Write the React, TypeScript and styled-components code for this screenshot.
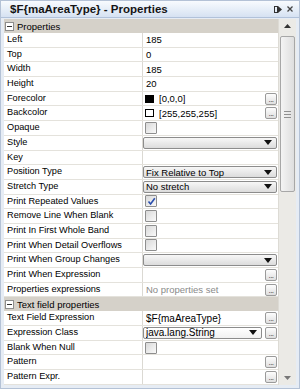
import styled, { createGlobalStyle } from "styled-components";

const GlobalStyle = createGlobalStyle`
  body {
    margin: 0;
    font-family: "Liberation Sans", Arial, sans-serif;
    background: #ffffff;
  }
`;

const Window = styled.div`
  width: 300px;
  height: 389px;
  box-sizing: border-box;
  display: flex;
  flex-direction: column;
  background: #e6ecf4;
  border: 1px solid #b4c2d6;
  overflow: hidden;
`;

const TitleBar = styled.div`
  height: 16px;
  display: flex;
  align-items: center;
  padding: 0 6px 0 9px;
  background: linear-gradient(#f8fbfe, #d6e2f2);
  border-bottom: 1px solid #b1c2da;
`;

const Title = styled.div`
  flex: 1;
  font-size: 11.5px;
  font-weight: bold;
  color: #151515;
  white-space: nowrap;
`;

const TitleButtons = styled.div`
  display: flex;
  align-items: center;
  gap: 5px;
`;

const Body = styled.div`
  flex: 1;
  display: flex;
  min-height: 0;
  padding: 1px 3px 3px 3px;
`;

const Sheet = styled.div`
  flex: 1;
  display: flex;
  flex-direction: column;
  background: #ffffff;
  overflow: hidden;
`;

const Category = styled.div`
  height: 14px;
  flex-shrink: 0;
  display: flex;
  align-items: center;
  gap: 3px;
  padding-left: 1px;
  background: #d5d1c9;
  font-size: 9.5px;
  color: #000;
  box-sizing: border-box;
`;

const Toggle = styled.div`
  width: 9px;
  height: 9px;
  box-sizing: border-box;
  border: 1px solid #8d8d8d;
  background: #fff;
  display: flex;
  align-items: center;
  justify-content: center;
  &::after {
    content: "";
    width: 5px;
    height: 1px;
    background: #333;
  }
`;

const Row = styled.div`
  height: 14.7px;
  flex-shrink: 0;
  box-sizing: border-box;
  display: grid;
  grid-template-columns: 139px 1fr;
  border-bottom: 1px solid #e4e2dc;
`;

const Label = styled.div`
  padding-left: 3px;
  border-right: 1px solid #dbd9d3;
  font-size: 9.2px;
  line-height: 13.7px;
  color: #000;
  white-space: nowrap;
  overflow: hidden;
`;

const Value = styled.div`
  display: flex;
  align-items: center;
  padding-right: 1px;
  min-width: 0;
`;

const ValueText = styled.span<{ $muted?: boolean; $big?: boolean }>`
  padding-left: 3px;
  font-size: ${({ $big }) => ($big ? "10px" : "9.5px")};
  color: ${({ $muted }) => ($muted ? "#8a8a8a" : "#000")};
  white-space: nowrap;
`;

const Swatch = styled.span<{ $color: string }>`
  width: 9px;
  height: 8px;
  margin-left: 2px;
  box-sizing: border-box;
  border: 1px solid #000;
  background: ${({ $color }) => $color};
  flex-shrink: 0;
`;

const Check = styled.span`
  width: 12px;
  height: 12px;
  margin-left: 2px;
  box-sizing: border-box;
  border: 1px solid #8e8e8e;
  border-radius: 1px;
  background: linear-gradient(135deg, #d9d9d9, #f9f9f9);
  display: flex;
  align-items: center;
  justify-content: center;
  flex-shrink: 0;
`;

const Combo = styled.div<{ $light?: boolean }>`
  flex: 1;
  height: 12px;
  box-sizing: border-box;
  display: flex;
  align-items: center;
  border: 1px solid #8c8c8c;
  border-radius: 2px;
  background: ${({ $light }) =>
    $light
      ? "linear-gradient(#ffffff, #f1f1f1)"
      : "linear-gradient(#f7f7f7, #dcdcdc)"};
  font-size: ${({ $light }) => ($light ? "10px" : "9.5px")};
  color: #000;
  padding-left: 2px;
  padding-right: 4px;
`;

const ComboText = styled.span`
  flex: 1;
  white-space: nowrap;
  overflow: hidden;
`;

const Dots = styled.div`
  width: 12px;
  height: 12px;
  margin-left: auto;
  box-sizing: border-box;
  border: 1px solid #9a9a9a;
  border-radius: 2px;
  background: linear-gradient(#fdfdfd, #dfdfdf);
  font-size: 8px;
  line-height: 12px;
  text-align: center;
  color: #333;
  flex-shrink: 0;
  letter-spacing: -0.5px;
`;

const GapDots = styled(Dots)`
  margin-left: 3px;
`;

const Scrollbar = styled.div`
  width: 18px;
  display: flex;
  flex-direction: column;
  align-items: center;
  background: #ebeae6;
  border-left: 1px solid #dddbd5;
  box-sizing: border-box;
`;

const Arrow = styled.div`
  height: 14px;
  display: flex;
  align-items: center;
  justify-content: center;
`;

const Thumb = styled.div`
  width: 15px;
  height: 156px;
  margin-top: 3px;
  box-sizing: border-box;
  border: 1px solid #a7a7a7;
  border-radius: 2px;
  background: linear-gradient(90deg, #f4f4f4, #dedede);
  display: flex;
  flex-direction: column;
  align-items: center;
  justify-content: center;
  gap: 2px;
`;

const Grip = styled.span`
  width: 7px;
  height: 1px;
  background: #8f8f8f;
`;

const Spacer = styled.div`
  flex: 1;
`;

const DropArrow = () => (
  <svg width="8" height="5" viewBox="0 0 8 5">
    <path d="M0 0 H8 L4 5 Z" fill="#111" />
  </svg>
);

const CheckMark = () => (
  <svg width="9" height="9" viewBox="0 0 9 9">
    <path
      d="M1.5 4.5 L3.6 7 L7.8 1.2"
      fill="none"
      stroke="#2b4fae"
      strokeWidth="1.6"
    />
  </svg>
);

type Cell =
  | { kind: "text"; text: string; muted?: boolean; big?: boolean; dots?: boolean }
  | { kind: "color"; color: string; text: string }
  | { kind: "check"; checked?: boolean }
  | { kind: "combo"; text: string; light?: boolean; dots?: boolean }
  | { kind: "dots" }
  | { kind: "empty" };

type Prop = { label: string; cell: Cell };

const general: Prop[] = [
  { label: "Left", cell: { kind: "text", text: "185" } },
  { label: "Top", cell: { kind: "text", text: "0" } },
  { label: "Width", cell: { kind: "text", text: "185" } },
  { label: "Height", cell: { kind: "text", text: "20" } },
  { label: "Forecolor", cell: { kind: "color", color: "#000", text: "[0,0,0]" } },
  { label: "Backcolor", cell: { kind: "color", color: "#fff", text: "[255,255,255]" } },
  { label: "Opaque", cell: { kind: "check" } },
  { label: "Style", cell: { kind: "combo", text: "" } },
  { label: "Key", cell: { kind: "empty" } },
  { label: "Position Type", cell: { kind: "combo", text: "Fix Relative to Top" } },
  { label: "Stretch Type", cell: { kind: "combo", text: "No stretch" } },
  { label: "Print Repeated Values", cell: { kind: "check", checked: true } },
  { label: "Remove Line When Blank", cell: { kind: "check" } },
  { label: "Print In First Whole Band", cell: { kind: "check" } },
  { label: "Print When Detail Overflows", cell: { kind: "check" } },
  { label: "Print When Group Changes", cell: { kind: "combo", text: "" } },
  { label: "Print When Expression", cell: { kind: "dots" } },
  {
    label: "Properties expressions",
    cell: { kind: "text", text: "No properties set", muted: true, dots: true },
  },
];

const textField: Prop[] = [
  {
    label: "Text Field Expression",
    cell: { kind: "text", text: "$F{maAreaType}", big: true, dots: true },
  },
  {
    label: "Expression Class",
    cell: { kind: "combo", text: "java.lang.String", light: true, dots: true },
  },
  { label: "Blank When Null", cell: { kind: "check" } },
  { label: "Pattern", cell: { kind: "dots" } },
  { label: "Pattern Expr.", cell: { kind: "dots" } },
];

function renderCell(cell: Cell) {
  switch (cell.kind) {
    case "text":
      return (
        <>
          <ValueText $muted={cell.muted} $big={cell.big}>
            {cell.text}
          </ValueText>
          {cell.dots && <Dots>...</Dots>}
        </>
      );
    case "color":
      return (
        <>
          <Swatch $color={cell.color} />
          <ValueText style={{ paddingLeft: 5 }}>{cell.text}</ValueText>
          <Dots>...</Dots>
        </>
      );
    case "check":
      return <Check>{cell.checked && <CheckMark />}</Check>;
    case "combo":
      return (
        <>
          <Combo $light={cell.light}>
            <ComboText>{cell.text}</ComboText>
            <DropArrow />
          </Combo>
          {cell.dots && <GapDots>...</GapDots>}
        </>
      );
    case "dots":
      return <Dots>...</Dots>;
    default:
      return null;
  }
}

function PropRow({ prop }: { prop: Prop }) {
  return (
    <Row>
      <Label>{prop.label}</Label>
      <Value>{renderCell(prop.cell)}</Value>
    </Row>
  );
}

export default function App() {
  return (
    <>
      <GlobalStyle />
      <Window>
        <TitleBar>
          <Title>$F{"{"}maAreaType{"}"} - Properties</Title>
          <TitleButtons>
            <svg width="8" height="7" viewBox="0 0 8 7">
              <rect x="0.5" y="0.5" width="3" height="6" fill="none" stroke="#333" />
              <path d="M4 0 L8 3.5 L4 7 Z" fill="#333" />
            </svg>
            <svg width="6" height="6" viewBox="0 0 6 6">
              <path d="M0.5 0.5 L5.5 5.5 M5.5 0.5 L0.5 5.5" stroke="#444" strokeWidth="1.3" />
            </svg>
          </TitleButtons>
        </TitleBar>
        <Body>
          <Sheet>
            <Category>
              <Toggle />
              Properties
            </Category>
            {general.map((p) => (
              <PropRow key={p.label} prop={p} />
            ))}
            <Category>
              <Toggle />
              Text field properties
            </Category>
            {textField.map((p) => (
              <PropRow key={p.label} prop={p} />
            ))}
          </Sheet>
          <Scrollbar>
            <Arrow>
              <svg width="7" height="4" viewBox="0 0 7 4">
                <path d="M0 4 L3.5 0 L7 4 Z" fill="#333" />
              </svg>
            </Arrow>
            <Thumb>
              <Grip />
              <Grip />
              <Grip />
            </Thumb>
            <Spacer />
            <Arrow>
              <svg width="7" height="4" viewBox="0 0 7 4">
                <path d="M0 0 L7 0 L3.5 4 Z" fill="#777" />
              </svg>
            </Arrow>
          </Scrollbar>
        </Body>
      </Window>
    </>
  );
}
